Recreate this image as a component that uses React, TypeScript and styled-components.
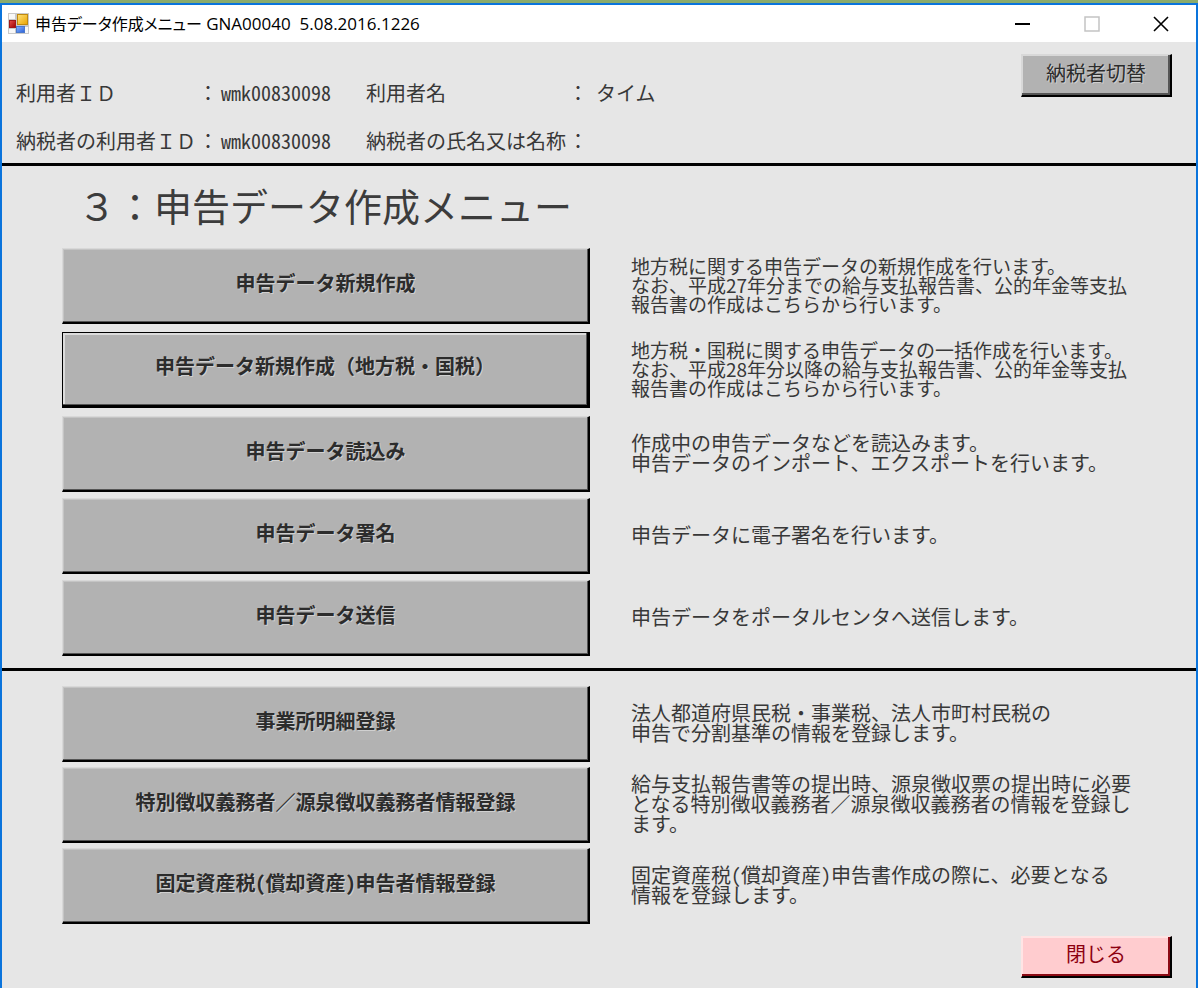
import styled, { createGlobalStyle, css } from "styled-components";

interface IMenuItem {
  label: string;
  text: string;
  dense?: boolean;
  selected?: boolean;
}

const createMenu: IMenuItem[] = [
  {
    label: "申告データ新規作成",
    text: `地方税に関する申告データの新規作成を行います。
なお、平成27年分までの給与支払報告書、公的年金等支払
報告書の作成はこちらから行います。`,
    dense: true,
  },
  {
    label: "申告データ新規作成（地方税・国税）",
    text: `地方税・国税に関する申告データの一括作成を行います。
なお、平成28年分以降の給与支払報告書、公的年金等支払
報告書の作成はこちらから行います。`,
    dense: true,
    selected: true,
  },
  {
    label: "申告データ読込み",
    text: `作成中の申告データなどを読込みます。
申告データのインポート、エクスポートを行います。`,
  },
  {
    label: "申告データ署名",
    text: "申告データに電子署名を行います。",
  },
  {
    label: "申告データ送信",
    text: "申告データをポータルセンタへ送信します。",
  },
];

const registerMenu: IMenuItem[] = [
  {
    label: "事業所明細登録",
    text: `法人都道府県民税・事業税、法人市町村民税の
申告で分割基準の情報を登録します。`,
  },
  {
    label: "特別徴収義務者／源泉徴収義務者情報登録",
    text: `給与支払報告書等の提出時、源泉徴収票の提出時に必要
となる特別徴収義務者／源泉徴収義務者の情報を登録し
ます。`,
  },
  {
    label: "固定資産税(償却資産)申告者情報登録",
    text: `固定資産税(償却資産)申告書作成の際に、必要となる
情報を登録します。`,
  },
];

// parentheses take half of a kanji cell
const withHalfWidth = (text: string) =>
  text
    .split(/([()])/)
    .map((part, i) => (i % 2 ? <Half key={i}>{part}</Half> : part));

const AppIcon = () => (
  <svg width="21" height="21" viewBox="0 0 21 21" aria-hidden="true">
    <defs>
      <linearGradient id="gold" x1="0" y1="0" x2="1" y2="1">
        <stop offset="0" stopColor="#ffe27a" />
        <stop offset="1" stopColor="#e9a400" />
      </linearGradient>
      <linearGradient id="red" x1="0" y1="0" x2="1" y2="1">
        <stop offset="0" stopColor="#e8504a" />
        <stop offset="1" stopColor="#9c0000" />
      </linearGradient>
      <linearGradient id="blue" x1="0" y1="0" x2="1" y2="1">
        <stop offset="0" stopColor="#86b2ff" />
        <stop offset="1" stopColor="#2a60d8" />
      </linearGradient>
    </defs>
    <rect width="21" height="21" fill="#c9c9c9" />
    <path d="M1 1h6v5H1zM1 16h6v4H1zM17 14h3v6h-3z" fill="#f8f8f8" />
    <rect x="9.5" y="1.5" width="10" height="10" fill="url(#gold)" stroke="#c08a10" />
    <rect x="1.5" y="7.5" width="6" height="7" fill="url(#red)" stroke="#a01818" />
    <rect x="8.5" y="13.5" width="8" height="6" fill="url(#blue)" stroke="#4a78cc" />
  </svg>
);

const MenuList = ({ items, gap }: { items: IMenuItem[]; gap: number }) => (
  <List>
    {items.map((item) => (
      <MenuRow key={item.label} $gap={item.dense ? 8 : gap}>
        <MenuBtn type="button" $selected={item.selected}>
          {withHalfWidth(item.label)}
        </MenuBtn>
        <Description $dense={item.dense}>{withHalfWidth(item.text)}</Description>
      </MenuRow>
    ))}
  </List>
);

const App = () => {
  return (
    <>
      <GlobalStyle />
      <Desktop>
        <Window>
          <TitleBar>
            <AppIcon />
            <Caption>
              <span>申告データ作成メニュー</span> GNA00040&nbsp; 5.08.2016.1226
            </Caption>
            <CaptionBtn type="button" aria-label="最小化">
              <svg width="16" height="16" viewBox="0 0 16 16">
                <path d="M0 8h15" stroke="#000" strokeWidth="2" />
              </svg>
            </CaptionBtn>
            <CaptionBtn type="button" aria-label="最大化" disabled>
              <svg width="16" height="16" viewBox="0 0 16 16">
                <path d="M1 1h14v14H1z" fill="none" stroke="#c4c4c4" strokeWidth="1.5" />
              </svg>
            </CaptionBtn>
            <CaptionBtn type="button" aria-label="ウィンドウを閉じる">
              <svg width="16" height="16" viewBox="0 0 16 16">
                <path d="M1 1l14 14M15 1L1 15" stroke="#000" strokeWidth="1.6" />
              </svg>
            </CaptionBtn>
          </TitleBar>

          <UserHeader>
            <UserInfo>
              <Term>
                利用者ＩＤ<span>：</span>
              </Term>
              <UserId>wmk00830098</UserId>
              <Term>
                利用者名<span>：</span>
              </Term>
              <UserName>タイム</UserName>
              <Term>
                納税者の利用者ＩＤ<span>：</span>
              </Term>
              <UserId>wmk00830098</UserId>
              <Term>
                納税者の氏名又は名称<span>：</span>
              </Term>
              <UserName />
            </UserInfo>
            <SwitchBtn type="button">納税者切替</SwitchBtn>
          </UserHeader>

          <Section>
            <Title>３：申告データ作成メニュー</Title>
            <MenuList items={createMenu} gap={6} />
          </Section>
          <Section>
            <MenuList items={registerMenu} gap={5} />
          </Section>

          <Footer>
            <CloseBtn type="button">閉じる</CloseBtn>
          </Footer>
        </Window>
      </Desktop>
    </>
  );
};

const GlobalStyle = createGlobalStyle`
  * {
    box-sizing: border-box;
  }
  body {
    margin: 0;
    background: #e6e6e6;
    color: #383838;
    font-family: "Noto Sans CJK JP", sans-serif;
    font-size: 20px;
  }
`;
const Desktop = styled.div`
  min-height: 100vh;
  display: flex;
  padding-top: 3px;
  background: #8bab6c;
`;
const Window = styled.div`
  flex: 1;
  min-width: 0;
  border: 2px solid #0a74dc;
  border-bottom: 0;
  background: #e6e6e6;
`;
const TitleBar = styled.header`
  height: 37px;
  display: flex;
  align-items: center;
  padding: 0 1px 0 6px;
  background: #fff;
`;
const Caption = styled.h1`
  flex: 1;
  margin: 0 0 0 6px;
  color: #000;
  font-family: "Open Sans", "Noto Sans CJK JP", sans-serif;
  font-size: 17px;
  font-weight: 400;
  line-height: 24px;
  white-space: nowrap;
  span {
    font-family: "Noto Sans CJK JP", sans-serif;
    font-size: 16px;
    font-feature-settings: "palt";
  }
`;
const CaptionBtn = styled.button`
  width: 69px;
  height: 37px;
  display: flex;
  align-items: center;
  justify-content: center;
  padding: 0;
  border: 0;
  background: none;
`;
const UserHeader = styled.div`
  display: flex;
  align-items: flex-start;
  justify-content: space-between;
  padding: 12px 24px 8px 14px;
`;
const UserInfo = styled.dl`
  display: grid;
  grid-template-columns: 202px 148px 222px auto;
  row-gap: 20px;
  margin: 0;
  padding-top: 25px;
  line-height: 28px;
  white-space: nowrap;
`;
const Term = styled.dt`
  display: flex;
  justify-content: space-between;
`;
const UserId = styled.dd`
  margin: 0 0 0 3px;
  font-feature-settings: "hwid";
`;
const UserName = styled.dd`
  margin: 0 0 0 8px;
`;
const Section = styled.section`
  padding: 15px 24px 12px 60px;
  border-top: 3px solid #000;
`;
const Title = styled.h2`
  margin: 0 0 20px 16px;
  font-size: 38px;
  font-weight: 400;
  line-height: 47px;
  color: #3c3c3c;
`;
const List = styled.ul`
  margin: 0;
  padding: 0;
  list-style: none;
`;
const MenuRow = styled.li<{ $gap: number }>`
  display: grid;
  grid-template-columns: 528fr 541fr;
  column-gap: 41px;
  align-items: center;
  margin-bottom: ${({ $gap }) => $gap}px;
  &:last-child {
    margin-bottom: 0;
  }
`;
const Description = styled.p<{ $dense?: boolean }>`
  margin: 0;
  padding-bottom: 3px;
  font-size: ${({ $dense }) => ($dense ? "19px" : "20px")};
  line-height: ${({ $dense }) => ($dense ? "19px" : "20px")};
  white-space: pre;
`;
const Half = styled.span`
  font-feature-settings: "hwid";
`;

const baseBtn = css`
  padding: 0 0 6px;
  border: 1px solid #d8d8d8;
  border-right: 2px solid #000;
  border-bottom: 2px solid #000;
  background: #b2b2b2;
  box-shadow: inset -1px -1px 0 #555, inset 1px 1px 0 #c4c4c4;
  color: #2c2c2c;
  font-family: "Noto Sans CJK JP", sans-serif;
  font-size: 20px;
  line-height: 24px;
  text-shadow: 1px 1px 0 #d0d0d0;
  cursor: pointer;
`;
const MenuBtn = styled.button<{ $selected?: boolean }>`
  ${baseBtn};
  height: 76px;
  font-weight: 700;
  ${({ $selected }) =>
    $selected &&
    css`
      border: 1px solid #000;
      border-right-width: 3px;
      border-bottom-width: 3px;
      box-shadow: inset -1px -1px 0 #555, inset 2px 2px 0 #dcdcdc;
    `}
`;
const SwitchBtn = styled.button`
  ${baseBtn};
  width: 151px;
  height: 43px;
  padding-bottom: 4px;
  box-shadow: inset -2px -2px 0 #555, inset 1px 1px 0 #d8d8d8;
`;
const Footer = styled.footer`
  display: flex;
  justify-content: flex-end;
  padding: 0 24px 11px;
`;
const CloseBtn = styled.button`
  ${baseBtn};
  width: 151px;
  height: 42px;
  border-color: #ffe4e4 #000 #000 #ffe4e4;
  background: #ffcccf;
  box-shadow: inset -2px -2px 0 #8c0a14, inset 1px 1px 0 #ffe4e4;
  color: #8c0010;
  text-shadow: none;
`;

export default App;
